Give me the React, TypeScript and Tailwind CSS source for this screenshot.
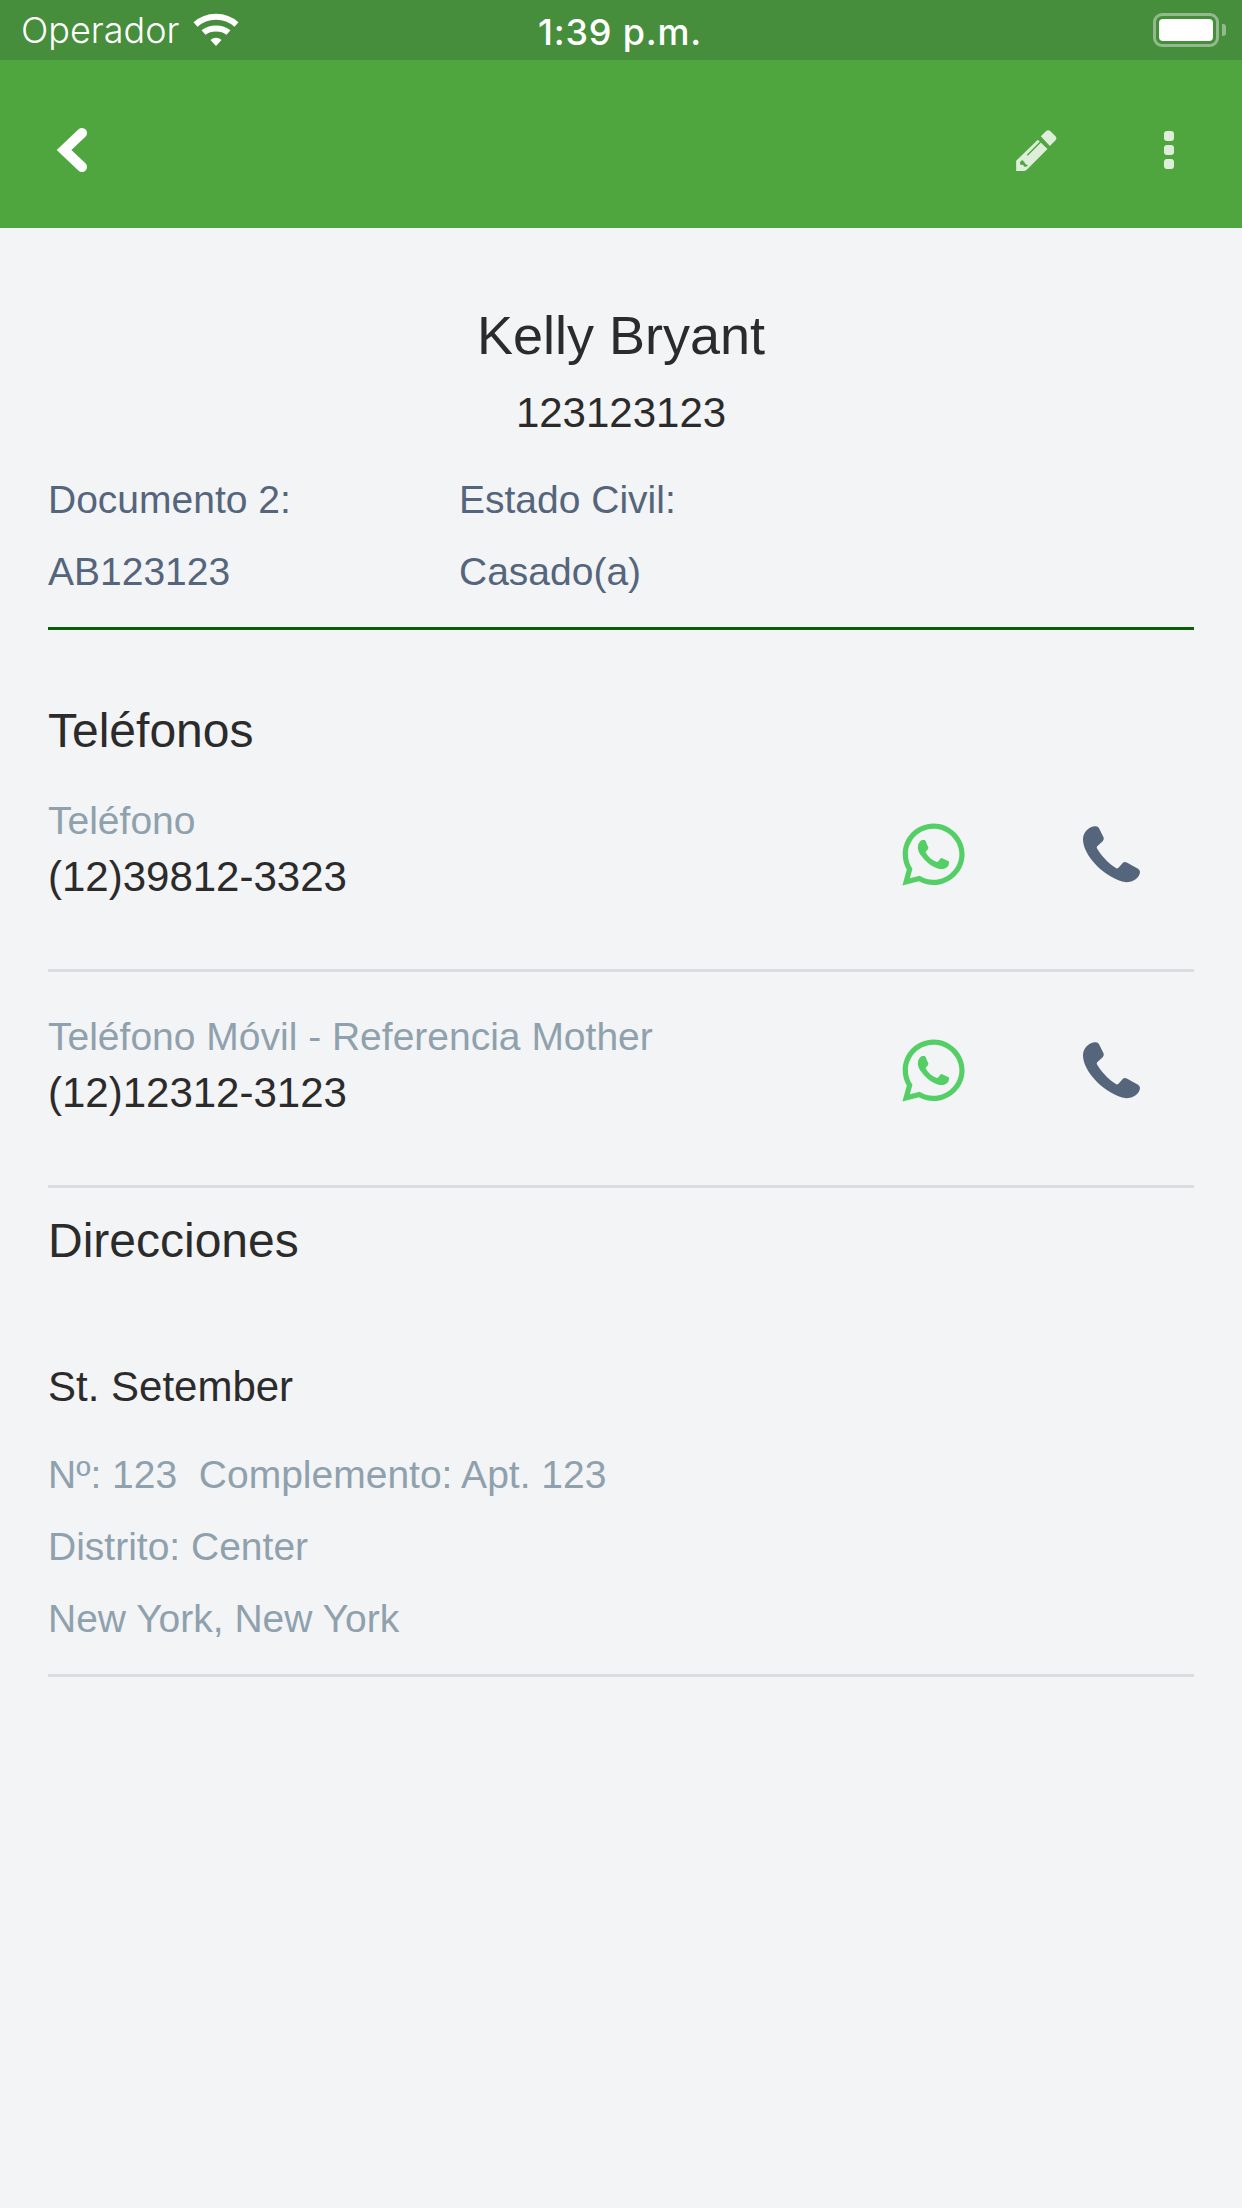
import { FaWhatsapp } from "react-icons/fa";

function Phone() {
  return (
    <svg width="57" height="57" viewBox="0 0 172 172" fill="#54657C" aria-hidden="true">
      <path d="M35 1 Q44 -1 48 6 L62 34 Q64 40 60 45 L43 61 Q40 64 43 69 C56 92 76 112 99 127 Q103 130 107 126 L120 112 Q125 106 132 110 L166 129 Q172 133 172 139 C171 156 152 170 130 170 C70 160 0 92 0 40 C0 22 14 4 35 1 Z" />
    </svg>
  );
}

function Wifi() {
  return (
    <svg width="46" height="34" viewBox="0 0 46 34" fill="none" stroke="#fff" strokeWidth="6" aria-hidden="true">
      <path d="M2.5 11.5 C14 1 32 1 43.5 11.5" />
      <path d="M10.5 19.5 C17 14 29 14 35.5 19.5" />
      <path d="M17.5 27 L23 33 L28.5 27 C25 24 21 24 17.5 27 Z" fill="#fff" stroke="none" />
    </svg>
  );
}

function Pencil() {
  return (
    <svg width="41" height="41" viewBox="0 0 122 123" fill="#DFEEDB" aria-hidden="true">
      <path d="M74 19 L90 3 Q96 -2 102 3 L118 19 Q123 25 118 31 L101 48 Z" />
      <path d="M65 29 L94 57 L31 120 L24 123 L0 123 L0 92 Z" />
      <path d="M32 74 L72 34 L75 37 L35 77 Z M11 97 L18 90 L24 95 L27 101 L36 107 L26 111 L20 104 L13 105 Z" fill="#4FA63F" />
    </svg>
  );
}

function PhoneRow({ label, number }: { label: string; number: string }) {
  return (
    <div className="flex h-[216px] border-b-[3px] border-[#D9DDE0]">
      <div className="flex-1 pt-[37px]">
        <div className="text-[39px] leading-[55px] text-[#8FA1AD]">{label}</div>
        <div className="text-[42px] leading-[58px] text-[#2B2B2B]">{number}</div>
      </div>
      <div className="flex h-[200px] w-[300px] items-center pl-[4px]">
        <div className="-mt-[4px] flex w-[116px] justify-start">
          <FaWhatsapp className="text-[71px] text-[#54CF66]" />
        </div>
        <div className="-mt-[4px] ml-[69px]">
          <Phone />
        </div>
      </div>
    </div>
  );
}

export default function App() {
  return (
    <div className="flex h-[2208px] w-[1242px] flex-col bg-[#F3F4F6] font-['Liberation_Sans',sans-serif]">
      <div className="relative flex h-[60px] items-center justify-between bg-[#468E3B] pl-[21px] pr-[16px] text-white">
        <div className="flex items-center gap-[13px] font-['Inter',sans-serif]">
          <span className="text-[36px] font-light leading-[60px]">Operador</span>
          <Wifi />
        </div>
        <span className="absolute left-[538px] top-0 font-['Inter',sans-serif] text-[36px] font-medium leading-[64px] tracking-[0.8px]">1:39 p.m.</span>
        <div className="flex items-center gap-[3px]">
          <div className="h-[34px] w-[66px] rounded-[9px] border-[3px] border-[#91BB8B] p-[3px]">
            <div className="h-full w-full rounded-[4px] bg-white"></div>
          </div>
          <div className="h-[12px] w-[4px] rounded-r-[3px] bg-[#91BB8B]"></div>
        </div>
      </div>

      <div className="flex h-[168px] items-center justify-between bg-[#4FA63F] pl-[56px] pr-[68px] pt-[12px]">
        <svg width="32" height="46" viewBox="0 0 32 46" fill="none" stroke="#fff" strokeWidth="10" strokeLinecap="round" aria-hidden="true">
          <path d="M26 6 L8 23 L26 40" />
        </svg>
        <div className="flex items-center gap-[107px]">
          <Pencil />
          <div className="flex flex-col gap-[4px]">
            <div className="h-[10px] w-[10px] rounded-[3px] bg-[#DFEEDB]"></div>
            <div className="h-[10px] w-[10px] rounded-[3px] bg-[#DFEEDB]"></div>
            <div className="h-[10px] w-[10px] rounded-[3px] bg-[#DFEEDB]"></div>
          </div>
        </div>
      </div>

      <div className="flex flex-col px-[48px]">
        <div className="border-b-[3px] border-[#0B5C0B] pb-[19px] pt-[76px]">
          <div className="text-center text-[54px] leading-[62px] text-[#2B2B2B]">Kelly Bryant</div>
          <div className="mt-[22px] text-center text-[42px] leading-[50px] text-[#2B2B2B]">123123123</div>
          <div className="mt-[26px] flex text-[39px] leading-[72px] text-[#54657C]">
            <div className="w-[411px]">
              <div>Documento 2:</div>
              <div>AB123123</div>
            </div>
            <div>
              <div>Estado Civil:</div>
              <div>Casado(a)</div>
            </div>
          </div>
        </div>

        <div className="mt-[71px] text-[48px] leading-[60px] text-[#2B2B2B]">Teléfonos</div>
        <div className="-mt-[5px]">
          <PhoneRow label="Teléfono" number="(12)39812-3323" />
          <PhoneRow label="Teléfono Móvil - Referencia Mother" number="(12)12312-3123" />
        </div>
        <div className="mt-[23px] text-[48px] leading-[60px] text-[#2B2B2B]">Direcciones</div>

        <div className="mt-[86px] border-b-[3px] border-[#D9DDE0] pb-[19px]">
          <div className="text-[42px] leading-[60px] text-[#2B2B2B]">St. Setember</div>
          <div className="mt-[22px] text-[39px] leading-[72px] text-[#8FA1AD]">
            <div className="whitespace-pre">Nº: 123  Complemento: Apt. 123</div>
            <div>Distrito: Center</div>
            <div>New York, New York</div>
          </div>
        </div>
      </div>
    </div>
  );
}
